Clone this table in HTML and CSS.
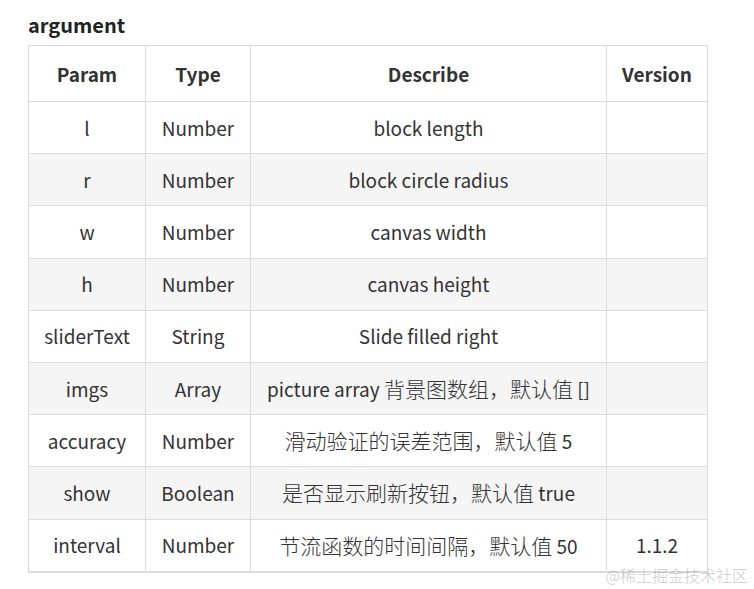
FILE: index.html
```html
<!DOCTYPE html>
<html>
<head>
<meta charset="utf-8">
<link rel="stylesheet" href="styles.css">
</head>
<body>
<div class="page">
  <h3 class="title">argument</h3>
  <table class="args">
    <colgroup>
      <col class="c1"><col class="c2"><col class="c3"><col class="c4">
    </colgroup>
    <thead>
      <tr><th>Param</th><th>Type</th><th>Describe</th><th>Version</th></tr>
    </thead>
    <tbody>
      <tr><td>l</td><td>Number</td><td>block length</td><td></td></tr>
      <tr><td>r</td><td>Number</td><td>block circle radius</td><td></td></tr>
      <tr><td>w</td><td>Number</td><td>canvas width</td><td></td></tr>
      <tr><td>h</td><td>Number</td><td>canvas height</td><td></td></tr>
      <tr><td>sliderText</td><td>String</td><td>Slide filled right</td><td></td></tr>
      <tr><td>imgs</td><td>Array</td><td>picture array <span class="zh">背景图数组，默认值</span> []</td><td></td></tr>
      <tr><td>accuracy</td><td>Number</td><td><span class="zh">滑动验证的误差范围，默认值</span> 5</td><td></td></tr>
      <tr><td>show</td><td>Boolean</td><td><span class="zh">是否显示刷新按钮，默认值</span> true</td><td></td></tr>
      <tr><td>interval</td><td>Number</td><td><span class="zh">节流函数的时间间隔，默认值</span> 50</td><td>1.1.2</td></tr>
    </tbody>
  </table>
  <div class="watermark">@稀土掘金技术社区</div>
</div>
</body>
</html>
```
FILE: styles.css
```css
html, body {
  margin: 0;
  padding: 0;
  background: #fff;
}
body {
  font-family: "Noto Sans CJK SC", "Noto Sans", sans-serif;
  color: #333;
}
.page {
  position: relative;
  width: 754px;
  height: 589px;
  padding: 10px 0 0 28px;
  box-sizing: border-box;
}
.title {
  margin: 0 0 5px 0;
  font-size: 20px;
  line-height: 30px;
  font-weight: 700;
  color: #222;
}
.args {
  border-collapse: collapse;
  width: 679px;
  table-layout: fixed;
  font-size: 19px;
  line-height: 26px;
}
.c1 { width: 117px; }
.c2 { width: 105px; }
.c3 { width: 356px; }
.c4 { width: 101px; }
.args th, .args td {
  border: 1px solid #dcdcdc;
  text-align: center;
  padding: 0 2px;
  white-space: nowrap;
}
.args th {
  height: 55px;
  font-weight: 700;
  color: #333;
}
.args td {
  height: 51.2px;
  color: #333;
}
.args tbody tr:nth-child(even) td {
  background: #f5f5f5;
}
.args tbody tr:last-child td {
  border-bottom: 2px solid #dcdcdc;
}
.zh {
  font-size: 21px;
  font-weight: 300;
  line-height: 26px;
}
.watermark {
  position: absolute;
  right: 6px;
  top: 565px;
  font-size: 16px;
  line-height: 20px;
  font-weight: 300;
  color: rgba(150, 150, 150, 0.5);
}
```
